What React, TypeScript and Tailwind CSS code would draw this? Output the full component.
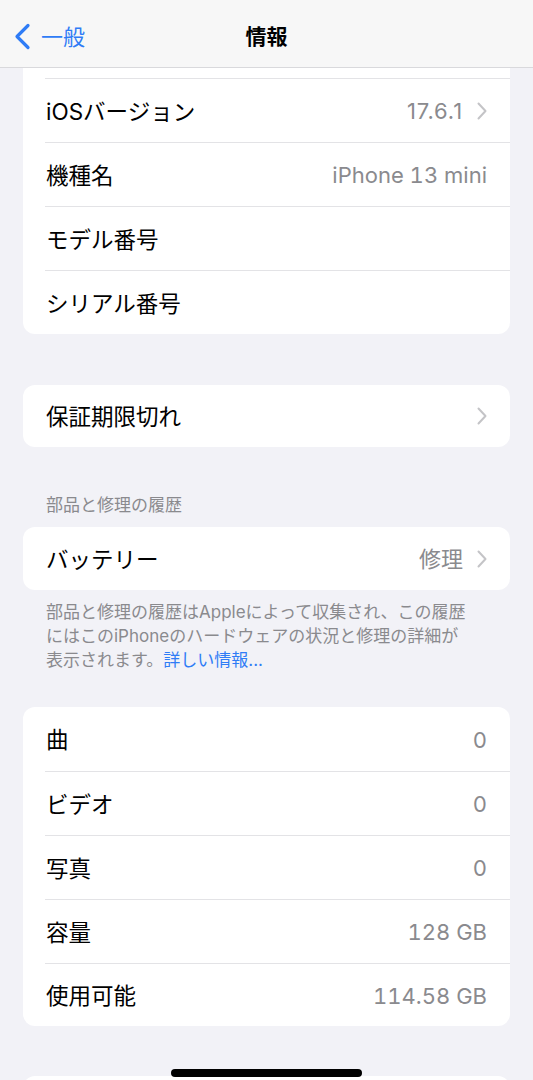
import React from "react";

const font = { fontFamily: 'Inter, "Noto Sans CJK JP", sans-serif' };

function Chevron() {
  return (
    <svg width="10" height="18" viewBox="0 0 10 18" fill="none" className="ml-[14px]">
      <path d="M1.5 1.5L8.5 9L1.5 16.5" stroke="#c4c4c7" strokeWidth="2" strokeLinecap="round" strokeLinejoin="round" />
    </svg>
  );
}

function Row({ label, value, chevron, first, h = "h-[64px]", valueClass = "tabular-nums" }: { label: string; value?: string; chevron?: boolean; first?: boolean; h?: string; valueClass?: string }) {
  return (
    <div className={`pl-[22px] ${h}`}>
      <div className={`flex h-full items-center pr-[23px] ${first ? "" : "border-t border-[#e3e3e6]"}`}>
        <span className="flex-1 pl-px pt-[2px] text-[22.5px] text-black">{label}</span>
        {value && <span className={`pt-[2px] text-[22px] text-[#8a8a8e] ${valueClass}`}>{value}</span>}
        {chevron && <Chevron />}
      </div>
    </div>
  );
}

export default function App() {
  return (
    <div className="relative h-[1080px] overflow-hidden bg-[#f2f2f7]" style={font}>
      <div className="relative flex h-[68px] items-center border-b border-[#d9d9dc] bg-[#f7f7f7] pt-[6px]">
        <div className="flex items-center pl-[13px] text-[#2f7cf6]">
          <svg width="18" height="27" viewBox="0 0 18 27" fill="none">
            <path d="M15 2.5L4 13.5L15 24.5" stroke="#2f7cf6" strokeWidth="3.2" strokeLinecap="round" strokeLinejoin="round" />
          </svg>
          <span className="ml-[10px] text-[22px] leading-none">一般</span>
        </div>
        <div className="absolute inset-x-0 top-0 flex h-full items-center justify-center pt-[6px]">
          <span className="text-[21px] font-bold text-black">情報</span>
        </div>
      </div>

      <div className="mx-[23px] overflow-hidden rounded-b-[12px] bg-white">
        <div className="h-[10px]" />
        <Row label="iOSバージョン" value="17.6.1" chevron valueClass="tracking-[0.04em]" />
        <Row label="機種名" value="iPhone 13 mini" />
        <Row label="モデル番号" />
        <Row label="シリアル番号" />
      </div>

      <div className="mx-[23px] mt-[51px] rounded-[12px] bg-white">
        <Row label="保証期限切れ" chevron first h="h-[62px]" />
      </div>

      <div className="mt-[46px] pl-[46px] text-[17px] leading-[24px] text-[#8a8a8e]">部品と修理の履歴</div>

      <div className="mx-[23px] mt-[10px] rounded-[12px] bg-white">
        <Row label="バッテリー" value="修理" chevron first h="h-[63px]" />
      </div>

      <div className="mt-[10px] pl-[46px] pr-[20px] text-[17px] leading-[24px] text-[#8a8a8e]">
        部品と修理の履歴はAppleによって収集され、この履歴
        <br />
        にはこのiPhoneのハードウェアの状況と修理の詳細が
        <br />
        表示されます。<span className="text-[#2f7cf6]">詳しい情報...</span>
      </div>

      <div className="mx-[23px] mt-[35px] overflow-hidden rounded-[12px] bg-white">
        <Row label="曲" value="0" first />
        <Row label="ビデオ" value="0" />
        <Row label="写真" value="0" />
        <Row label="容量" value="128 GB" />
        <Row label="使用可能" value="114.58 GB" h="h-[63px]" />
      </div>

      <div className="mx-[23px] mt-[50px] h-[60px] rounded-t-[12px] bg-white" />

      <div className="absolute bottom-[3px] left-[171px] h-[8px] w-[191px] rounded-full bg-black" />
    </div>
  );
}
